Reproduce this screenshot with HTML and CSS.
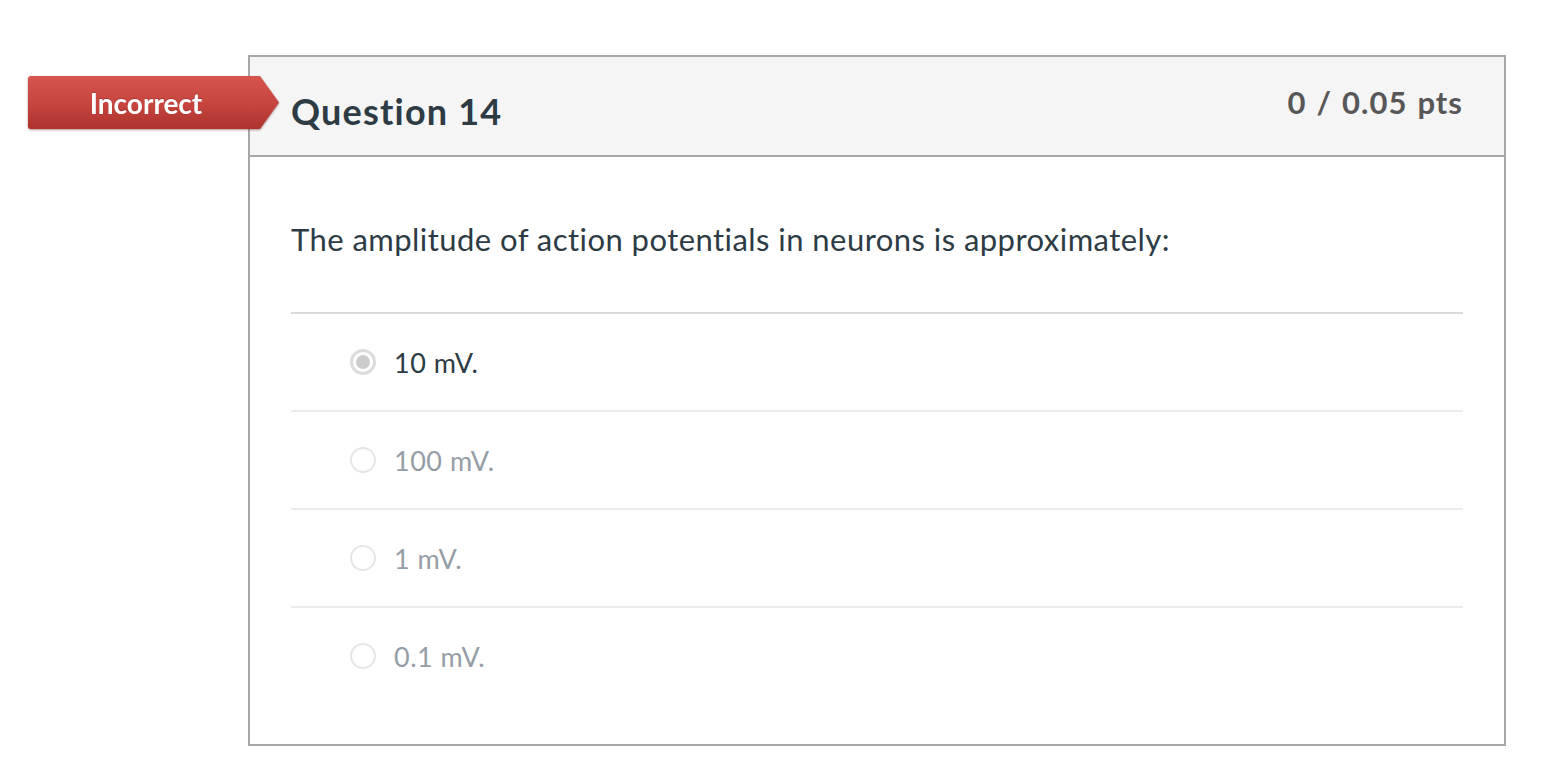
FILE: index.html
```html
<!DOCTYPE html>
<html lang="en">
<head>
<meta charset="utf-8">
<title>Question 14</title>
<link rel="stylesheet" href="styles.css">
</head>
<body>
<div class="page">
  <div class="question">
    <div class="badge-wrap">
      <div class="badge"><span class="badge-text">Incorrect</span></div>
    </div>
    <div class="q-header">
      <h2 class="q-title">Question 14</h2>
      <div class="q-points">0 / 0.05 pts</div>
    </div>
    <div class="q-body">
      <p class="q-text">The amplitude of action potentials in neurons is approximately:</p>
      <div class="answers">
        <div class="answer selected">
          <span class="radio"></span>
          <span class="answer-text">10 mV.</span>
        </div>
        <div class="answer">
          <span class="radio"></span>
          <span class="answer-text">100 mV.</span>
        </div>
        <div class="answer">
          <span class="radio"></span>
          <span class="answer-text">1 mV.</span>
        </div>
        <div class="answer">
          <span class="radio"></span>
          <span class="answer-text">0.1 mV.</span>
        </div>
      </div>
    </div>
  </div>
</div>
</body>
</html>
```

FILE: styles.css
```css
html, body {
  margin: 0;
  padding: 0;
  background: #ffffff;
}

body {
  font-family: Lato, "Open Sans", "Liberation Sans", sans-serif;
  color: #2d3b45;
}

.page {
  padding: 55px 0 0 248px;
}

.question {
  position: relative;
  width: 1258px;
  box-sizing: border-box;
  border: 2px solid #a8a8a8;
  background: #ffffff;
}

.badge-wrap {
  position: absolute;
  left: -222px;
  top: 19px;
  filter: drop-shadow(0 1px 1px rgba(80, 10, 10, 0.45));
}

.badge {
  width: 251px;
  height: 53px;
  border-radius: 3px;
  background: linear-gradient(to bottom, #d6554f 0%, #c5443e 55%, #ad322d 100%);
  clip-path: polygon(0 0, 232px 0, 251px 50%, 232px 100%, 0 100%);
  display: flex;
  align-items: center;
}

.badge-text {
  width: 232px;
  text-align: center;
  color: #ffffff;
  font-weight: 700;
  font-size: 28px;
  line-height: 1;
  padding-left: 4px;
  box-sizing: border-box;
  text-shadow: 0 -1px 0 rgba(120, 20, 20, 0.35);
}

.q-header {
  height: 98px;
  background: #f5f5f5;
  border-bottom: 2px solid #a8a8a8;
  display: flex;
  justify-content: space-between;
  align-items: flex-start;
  padding: 0 41px;
}

.q-title {
  margin: 36px 0 0 0;
  font-size: 36px;
  line-height: 1;
  font-weight: 700;
  letter-spacing: 1.2px;
  color: #2d3b45;
}

.q-points {
  margin-top: 30px;
  font-size: 31px;
  line-height: 1;
  font-weight: 700;
  letter-spacing: 1px;
  word-spacing: 1.5px;
  color: #575757;
}

.q-body {
  padding: 67px 41px 40px;
}

.q-text {
  margin: 0 0 57px 0;
  font-size: 31px;
  line-height: 1;
  letter-spacing: 0.45px;
  color: #2d3b45;
}

.answers {
  border-top: 2px solid #dadada;
}

.answer {
  height: 96px;
  display: flex;
  align-items: center;
  padding-left: 59px;
  border-bottom: 2px solid #ececec;
}

.answer:last-child {
  border-bottom: none;
}

.radio {
  width: 26px;
  height: 26px;
  box-sizing: border-box;
  border-radius: 50%;
  border: 2px solid #e6e6e6;
  background: #ffffff;
  display: flex;
  align-items: center;
  justify-content: center;
  flex: none;
}

.answer.selected .radio {
  border: 3px solid #dcdcdc;
}

.answer.selected .radio::after {
  content: "";
  width: 14px;
  height: 14px;
  border-radius: 50%;
  background: #cccccc;
}

.answer-text {
  margin-left: 18px;
  font-size: 27px;
  line-height: 1;
  letter-spacing: 0.5px;
  color: #959ea6;
}

.answer.selected .answer-text {
  color: #2d3b45;
}
```
